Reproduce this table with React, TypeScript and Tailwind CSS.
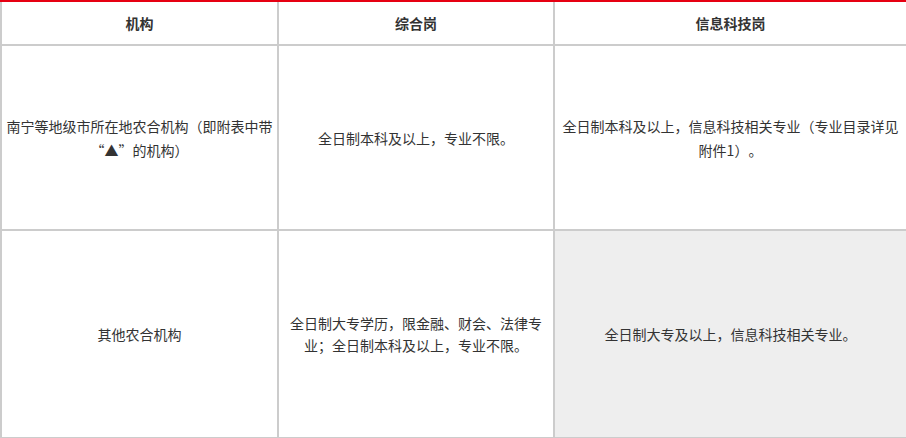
const font = { fontFamily: '"Noto Sans CJK SC", "Noto Sans", sans-serif' };

function Cell({
  children,
  className = "",
}: {
  children: React.ReactNode;
  className?: string;
}) {
  return (
    <td
      className={
        "border-2 border-[#cccccc] px-[4px] text-center align-middle text-[14px] text-[#333333] [text-spacing-trim:space-all] " +
        className
      }
    >
      {children}
    </td>
  );
}

export default function App() {
  return (
    <div className="w-[906px] h-[438px] bg-white" style={font}>
      <div className="h-[2px] bg-[#e60012]" />
      <table className="w-[906px] table-fixed border-collapse">
        <colgroup>
          <col className="w-[277px]" />
          <col className="w-[276px]" />
          <col className="w-[353px]" />
        </colgroup>
        <tbody>
          <tr className="h-[43px]">
            <Cell className="border-t-0 font-bold">机构</Cell>
            <Cell className="border-t-0 font-bold">综合岗</Cell>
            <Cell className="border-t-0 font-bold">信息科技岗</Cell>
          </tr>
          <tr className="h-[185px]">
            <Cell className="leading-6">
              南宁等地级市所在地农合机构（即附表中带<wbr />“▲”的机构）
            </Cell>
            <Cell className="leading-6">全日制本科及以上，专业不限。</Cell>
            <Cell className="leading-6">
              全日制本科及以上，信息科技相关专业（专业目录详见附件1）。
            </Cell>
          </tr>
          <tr className="h-[208px]">
            <Cell className="leading-[22px]">其他农合机构</Cell>
            <Cell className="leading-[22px]">
              全日制大专学历，限金融、财会、法律专业；全日制本科及以上，专业不限。
            </Cell>
            <Cell className="leading-[22px] bg-[#eeeeee]">
              全日制大专及以上，信息科技相关专业。
            </Cell>
          </tr>
        </tbody>
      </table>
    </div>
  );
}
